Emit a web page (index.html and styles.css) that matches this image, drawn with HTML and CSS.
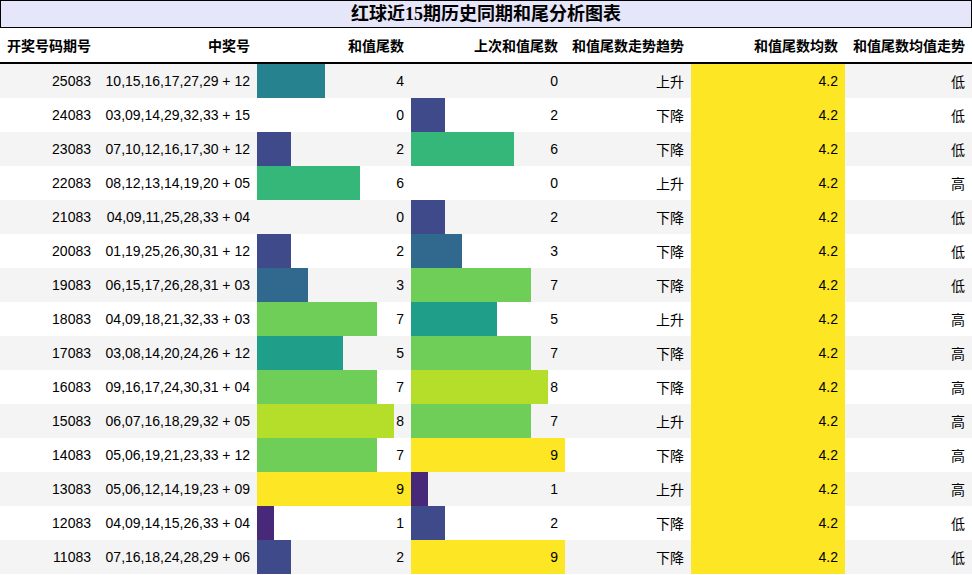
FILE: index.html
```html
<!DOCTYPE html>
<html lang="zh">
<head>
<meta charset="utf-8">
<title>红球近15期历史同期和尾分析图表</title>
<link rel="stylesheet" href="styles.css">
</head>
<body>
<div class="title">红球近15期历史同期和尾分析图表</div>
<table class="grid">
  <colgroup>
    <col class="c-issue"><col class="c-nums"><col class="c-bar"><col class="c-bar"><col class="c-trend"><col class="c-bar"><col class="c-trend2">
  </colgroup>
  <thead>
    <tr><th>开奖号码期号</th><th>中奖号</th><th>和值尾数</th><th>上次和值尾数</th><th>和值尾数走势趋势</th><th>和值尾数均数</th><th>和值尾数均值走势</th></tr>
  </thead>
  <tbody>
    <tr><td>25083</td><td>10,15,16,17,27,29 + 12</td><td style="background:linear-gradient(90deg,#26828e 44.4%,transparent 44.4%)">4</td><td>0</td><td>上升</td><td class="avg">4.2</td><td>低</td></tr>
    <tr><td>24083</td><td>03,09,14,29,32,33 + 15</td><td>0</td><td style="background:linear-gradient(90deg,#3e4a89 22.2%,transparent 22.2%)">2</td><td>下降</td><td class="avg">4.2</td><td>低</td></tr>
    <tr><td>23083</td><td>07,10,12,16,17,30 + 12</td><td style="background:linear-gradient(90deg,#3e4a89 22.2%,transparent 22.2%)">2</td><td style="background:linear-gradient(90deg,#35b779 66.7%,transparent 66.7%)">6</td><td>下降</td><td class="avg">4.2</td><td>低</td></tr>
    <tr><td>22083</td><td>08,12,13,14,19,20 + 05</td><td style="background:linear-gradient(90deg,#35b779 66.7%,transparent 66.7%)">6</td><td>0</td><td>上升</td><td class="avg">4.2</td><td>高</td></tr>
    <tr><td>21083</td><td>04,09,11,25,28,33 + 04</td><td>0</td><td style="background:linear-gradient(90deg,#3e4a89 22.2%,transparent 22.2%)">2</td><td>下降</td><td class="avg">4.2</td><td>低</td></tr>
    <tr><td>20083</td><td>01,19,25,26,30,31 + 12</td><td style="background:linear-gradient(90deg,#3e4a89 22.2%,transparent 22.2%)">2</td><td style="background:linear-gradient(90deg,#31688e 33.3%,transparent 33.3%)">3</td><td>下降</td><td class="avg">4.2</td><td>低</td></tr>
    <tr><td>19083</td><td>06,15,17,26,28,31 + 03</td><td style="background:linear-gradient(90deg,#31688e 33.3%,transparent 33.3%)">3</td><td style="background:linear-gradient(90deg,#6ece58 77.8%,transparent 77.8%)">7</td><td>下降</td><td class="avg">4.2</td><td>低</td></tr>
    <tr><td>18083</td><td>04,09,18,21,32,33 + 03</td><td style="background:linear-gradient(90deg,#6ece58 77.8%,transparent 77.8%)">7</td><td style="background:linear-gradient(90deg,#1f9e89 55.6%,transparent 55.6%)">5</td><td>上升</td><td class="avg">4.2</td><td>高</td></tr>
    <tr><td>17083</td><td>03,08,14,20,24,26 + 12</td><td style="background:linear-gradient(90deg,#1f9e89 55.6%,transparent 55.6%)">5</td><td style="background:linear-gradient(90deg,#6ece58 77.8%,transparent 77.8%)">7</td><td>下降</td><td class="avg">4.2</td><td>高</td></tr>
    <tr><td>16083</td><td>09,16,17,24,30,31 + 04</td><td style="background:linear-gradient(90deg,#6ece58 77.8%,transparent 77.8%)">7</td><td style="background:linear-gradient(90deg,#b5de2b 88.9%,transparent 88.9%)">8</td><td>下降</td><td class="avg">4.2</td><td>高</td></tr>
    <tr><td>15083</td><td>06,07,16,18,29,32 + 05</td><td style="background:linear-gradient(90deg,#b5de2b 88.9%,transparent 88.9%)">8</td><td style="background:linear-gradient(90deg,#6ece58 77.8%,transparent 77.8%)">7</td><td>上升</td><td class="avg">4.2</td><td>高</td></tr>
    <tr><td>14083</td><td>05,06,19,21,23,33 + 12</td><td style="background:linear-gradient(90deg,#6ece58 77.8%,transparent 77.8%)">7</td><td style="background:linear-gradient(90deg,#fde725 100%,transparent 100%)">9</td><td>下降</td><td class="avg">4.2</td><td>高</td></tr>
    <tr><td>13083</td><td>05,06,12,14,19,23 + 09</td><td style="background:linear-gradient(90deg,#fde725 100%,transparent 100%)">9</td><td style="background:linear-gradient(90deg,#482878 11.1%,transparent 11.1%)">1</td><td>上升</td><td class="avg">4.2</td><td>高</td></tr>
    <tr><td>12083</td><td>04,09,14,15,26,33 + 04</td><td style="background:linear-gradient(90deg,#482878 11.1%,transparent 11.1%)">1</td><td style="background:linear-gradient(90deg,#3e4a89 22.2%,transparent 22.2%)">2</td><td>下降</td><td class="avg">4.2</td><td>低</td></tr>
    <tr><td>11083</td><td>07,16,18,24,28,29 + 06</td><td style="background:linear-gradient(90deg,#3e4a89 22.2%,transparent 22.2%)">2</td><td style="background:linear-gradient(90deg,#fde725 100%,transparent 100%)">9</td><td>下降</td><td class="avg">4.2</td><td>低</td></tr>
  </tbody>
</table>
</body>
</html>
```
FILE: styles.css
```css
html, body {
  margin: 0;
  padding: 0;
  background: #fff;
}
body {
  width: 972px;
  font-family: "Liberation Sans", "Noto Sans CJK SC", sans-serif;
  font-size: 14px;
  color: #000;
}
.title {
  box-sizing: border-box;
  height: 28px;
  border: 1px solid #000;
  background: #e6e6fa;
  font-family: "Liberation Serif", "Noto Sans CJK SC", serif;
  font-weight: bold;
  font-size: 18px;
  line-height: 26px;
  text-align: center;
}
.grid {
  width: 972px;
  border-collapse: collapse;
  table-layout: fixed;
}
.c-issue { width: 98px; }
.c-nums { width: 159px; }
.c-bar { width: 154px; }
.c-trend { width: 126px; }
.c-trend2 { width: 127px; }
.grid th {
  height: 34px;
  padding: 0 7px;
  text-align: right;
  font-weight: bold;
  white-space: nowrap;
  border-bottom: 2px solid #000;
}
.grid th:first-child { text-align: left; }
.grid td {
  height: 34px;
  padding: 0 7px;
  text-align: right;
  white-space: nowrap;
}
.grid tbody tr:nth-child(odd) { background: #f4f4f4; }
.grid tbody tr:nth-child(even) { background: #fff; }
.grid td.avg { background: #fde725; }
```
